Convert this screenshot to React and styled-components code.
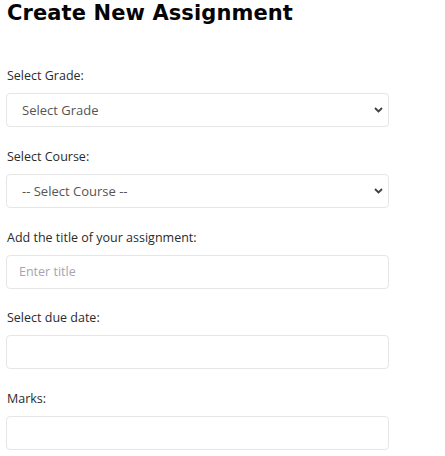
import React from 'react'
import styled, { createGlobalStyle } from 'styled-components'

const GlobalStyle = createGlobalStyle`
  body {
    margin: 0;
    background: #fff;
    font-family: 'Open Sans', 'Liberation Sans', sans-serif;
  }
`

const Page = styled.div`
  padding: 0 56px 0 6px;
`

const Title = styled.h1`
  margin: 0 0 42px 1px;
  font-family: 'DejaVu Sans', 'Open Sans', sans-serif;
  font-size: 21px;
  line-height: 26px;
  font-weight: 700;
  color: #050505;
  letter-spacing: 0.1px;
`

const Field = styled.div`
  display: flex;
  flex-direction: column;
  margin-bottom: 21.75px;
`

const Label = styled.label`
  margin: 0 0 9px 1px;
  font-size: 12.5px;
  line-height: 16px;
  color: #2b2b2b;
`

const SelectWrap = styled.div`
  position: relative;
`

const Select = styled.select`
  appearance: none;
  width: 100%;
  height: 34px;
  box-sizing: border-box;
  padding: 0 30px 0 15px;
  border: 1px solid #e6e6e6;
  border-radius: 4px;
  background: #fff;
  font-family: inherit;
  font-size: 13px;
  color: #555;
  outline: none;
`

const Chevron = styled.svg`
  position: absolute;
  right: 6px;
  top: 14px;
  pointer-events: none;
`

const Input = styled.input`
  width: 100%;
  height: 34px;
  box-sizing: border-box;
  padding: 0 12px;
  border: 1px solid #e6e6e6;
  border-radius: 4px;
  font-family: inherit;
  font-size: 12.5px;
  color: #333;
  outline: none;

  &::placeholder {
    color: #a4a4b6;
  }
`

const Arrow = () => (
  <Chevron width='9' height='6' viewBox='0 0 9 6'>
    <path d='M1 1 L4.5 4.5 L8 1' fill='none' stroke='#3f3f46' strokeWidth='1.8' />
  </Chevron>
)

export default function App() {
  return (
    <Page>
      <GlobalStyle />
      <Title>Create New Assignment</Title>

      <Field>
        <Label>Select Grade:</Label>
        <SelectWrap>
          <Select defaultValue=''>
            <option value=''>Select Grade</option>
          </Select>
          <Arrow />
        </SelectWrap>
      </Field>

      <Field>
        <Label>Select Course:</Label>
        <SelectWrap>
          <Select defaultValue=''>
            <option value=''>-- Select Course --</option>
          </Select>
          <Arrow />
        </SelectWrap>
      </Field>

      <Field>
        <Label>Add the title of your assignment:</Label>
        <Input placeholder='Enter title' />
      </Field>

      <Field>
        <Label>Select due date:</Label>
        <Input />
      </Field>

      <Field>
        <Label>Marks:</Label>
        <Input />
      </Field>
    </Page>
  )
}
